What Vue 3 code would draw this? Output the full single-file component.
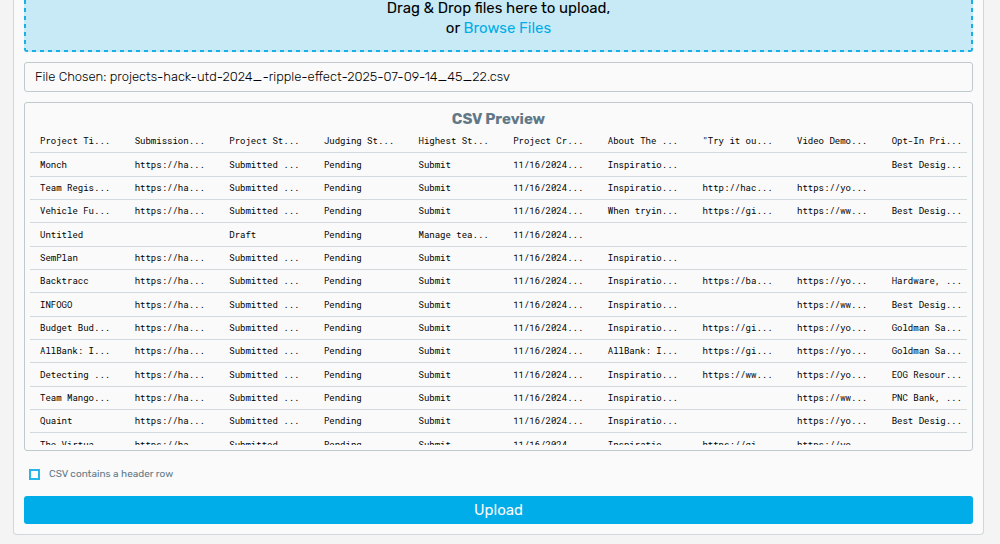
<script setup>
import { ref } from 'vue'

const hasHeader = ref(false)

const headers = ['Project Ti...', 'Submission...', 'Project St...', 'Judging St...', 'Highest St...', 'Project Cr...', 'About The ...', '"Try it ou...', 'Video Demo...', 'Opt-In Pri...']

const ha = 'https://ha...'
const gi = 'https://gi...'
const yo = 'https://yo...'
const ww = 'https://ww...'
const sub = 'Submitted ...'
const day = '11/16/2024...'
const insp = 'Inspiratio...'

const rows = [
  ['Monch', ha, sub, 'Pending', 'Submit', day, insp, '', '', 'Best Desig...'],
  ['Team Regis...', ha, sub, 'Pending', 'Submit', day, insp, 'http://hac...', yo, ''],
  ['Vehicle Fu...', ha, sub, 'Pending', 'Submit', day, 'When tryin...', gi, ww, 'Best Desig...'],
  ['Untitled', '', 'Draft', 'Pending', 'Manage tea...', day, '', '', '', ''],
  ['SemPlan', ha, sub, 'Pending', 'Submit', day, insp, '', '', ''],
  ['Backtracc', ha, sub, 'Pending', 'Submit', day, insp, 'https://ba...', yo, 'Hardware, ...'],
  ['INFOGO', ha, sub, 'Pending', 'Submit', day, insp, '', ww, 'Best Desig...'],
  ['Budget Bud...', ha, sub, 'Pending', 'Submit', day, insp, gi, yo, 'Goldman Sa...'],
  ['AllBank: I...', ha, sub, 'Pending', 'Submit', day, 'AllBank: I...', gi, yo, 'Goldman Sa...'],
  ['Detecting ...', ha, sub, 'Pending', 'Submit', day, insp, ww, yo, 'EOG Resour...'],
  ['Team Mango...', ha, sub, 'Pending', 'Submit', day, insp, '', ww, 'PNC Bank, ...'],
  ['Quaint', ha, sub, 'Pending', 'Submit', day, insp, '', yo, 'Best Desig...'],
  ['The Virtua...', ha, sub, 'Pending', 'Submit', day, insp, gi, yo, ''],
]
</script>

<template>
  <main class="page">
    <form class="panel" @submit.prevent>
      <div class="dropzone">
        <p>Drag &amp; Drop files here to upload,<br />or <a href="#">Browse Files</a></p>
      </div>

      <p class="chosen">File Chosen: projects-hack-utd-2024_-ripple-effect-2025-07-09-14_45_22.csv</p>

      <section class="preview">
        <h2>CSV Preview</h2>
        <div class="scroller">
          <table>
            <thead>
              <tr><th v-for="h in headers" :key="h" scope="col">{{ h }}</th></tr>
            </thead>
            <tbody>
              <tr v-for="row in rows" :key="row[0]">
                <td v-for="(cell, i) in row" :key="i">{{ cell }}</td>
              </tr>
            </tbody>
          </table>
        </div>
      </section>

      <label class="check" for="has-header">
        <input id="has-header" v-model="hasHeader" type="checkbox" />
        <span>CSV contains a header row</span>
      </label>

      <button class="upload" type="submit">Upload</button>
    </form>
  </main>
</template>

<style>
body {
  background: #f4f4f4;
}
</style>

<style scoped>
.page {
  display: flow-root;
  padding: 0 16px 8px 13px;
  font-family: Rubik, Roboto, "Liberation Sans", sans-serif;
  color: #000;
}

.panel {
  display: flex;
  flex-direction: column;
  margin-top: -2px;
  padding: 0 10px 10px;
  border: 1px solid #d0d8dc;
  border-top: 0;
  border-radius: 0 0 4px 4px;
  background: #fafafa;
}

.dropzone {
  --dash: #14b0e6 0 4px, transparent 4px 8px;
  padding: 0 0 14px;
  background:
    repeating-linear-gradient(to right, var(--dash)) left bottom / 100% 2px no-repeat,
    repeating-linear-gradient(to top, var(--dash)) left top / 2px 100% no-repeat,
    repeating-linear-gradient(to top, var(--dash)) right top / 2px 100% no-repeat,
    #c8eaf6;
  border-radius: 0 0 3px 3px;
}

.dropzone p {
  margin: 0;
  font-size: 15px;
  line-height: 20px;
  text-align: center;
}

.dropzone a {
  color: #00ade8;
  text-decoration: none;
}

.chosen {
  margin: 10px 0 0;
  padding: 0 10px;
  border: 1px solid #bfcace;
  border-radius: 3px;
  font-size: 13px;
  font-weight: 350;
  line-height: 28px;
}

.preview {
  margin-top: 10px;
  padding: 5px;
  border: 1px solid #bfcace;
  border-radius: 3px;
}

.preview h2 {
  margin: 0;
  color: #607887;
  font-size: 15px;
  font-weight: 700;
  line-height: 22px;
  text-align: center;
}

.scroller {
  height: 315px;
  overflow: hidden;
}

table {
  width: 101%;
  border-collapse: separate;
  border-spacing: 0;
  table-layout: fixed;
  font-family: "Roboto Mono", "Liberation Mono", monospace;
  font-size: 9px;
  line-height: 12px;
}

th,
td {
  box-sizing: border-box;
  height: 23px;
  padding: 0 0 0 10px;
  border-bottom: 1px solid #d3dade;
  font-weight: 400;
  text-align: left;
  white-space: nowrap;
}

tr:nth-child(3n + 1) td {
  height: 24px;
}

.check {
  display: flex;
  align-items: center;
  gap: 9px;
  margin-top: 15px;
  padding-left: 5px;
  color: #607887;
  font-size: 10px;
  line-height: 16px;
}

.check input {
  appearance: none;
  box-sizing: border-box;
  width: 11px;
  height: 11px;
  margin: 0;
  border: 2px solid #25b7ea;
  background: #fff;
}

.check input:checked {
  background: #00ade8;
}

.upload {
  height: 28px;
  margin-top: 14px;
  padding: 0;
  border: 0;
  border-radius: 3px;
  background: #00ade8;
  color: #fafafa;
  font: inherit;
  font-size: 15px;
  line-height: 28px;
}
</style>
